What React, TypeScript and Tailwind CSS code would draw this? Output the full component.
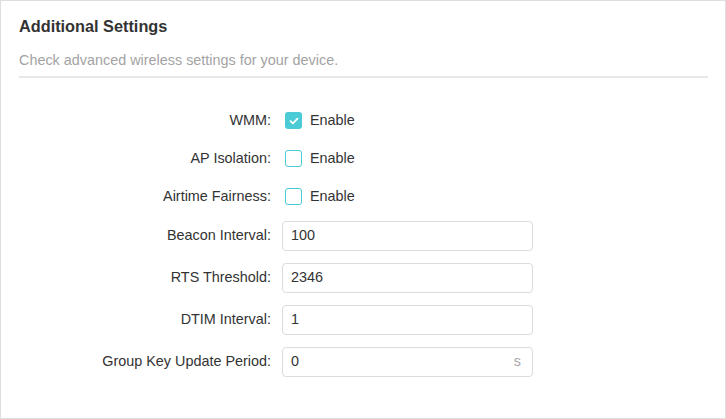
import React from 'react';

function CheckRow({ label, checked, last }: { label: string; checked?: boolean; last?: boolean }) {
  return (
    <div className={`flex items-center ${last ? 'h-[37px]' : 'h-[38px]'}`}>
      <div className="w-[252px] text-right text-[14.4px] text-[#333]">{label}:</div>
      <div className="ml-[14px] flex items-center">
        {checked ? (
          <span className="w-[17px] h-[17px] rounded-[3px] bg-[#4acbd6] flex items-center justify-center">
            <svg width="10" height="8" viewBox="0 0 10 8" fill="none">
              <path d="M1.5 4.2 L3.9 6.4 L8.5 1.6" stroke="#fff" strokeWidth="1.8" strokeLinecap="round" strokeLinejoin="round" />
            </svg>
          </span>
        ) : (
          <span className="w-[17px] h-[17px] rounded-[3px] border border-[#4acbd6] bg-white box-border" />
        )}
        <span className="ml-[8px] text-[14.4px] text-[#333]">Enable</span>
      </div>
    </div>
  );
}

function InputRow({ label, value, unit }: { label: string; value: string; unit?: string }) {
  return (
    <div className="flex items-center h-[42px]">
      <div className="w-[252px] text-right text-[14.4px] text-[#333]">{label}:</div>
      <div className="ml-[11px] w-[251px] h-[30px] border border-[#dcdcdc] rounded-[4px] bg-white flex items-center pl-[8px] pr-[11px]">
        <span className="flex-1 text-[14.4px] text-[#333]">{value}</span>
        {unit && <span className="text-[14.4px] text-[#aaa]">{unit}</span>}
      </div>
    </div>
  );
}

export default function App() {
  return (
    <div
      className="w-[726px] h-[419px] border border-[#dedede] bg-white box-border"
      style={{ fontFamily: '"Liberation Sans", Arial, sans-serif' }}
    >
      <div className="pl-[18px] pr-[17px] pt-[14px]">
        <h2 className="text-[16.3px] font-bold text-[#333] leading-[22px]">Additional Settings</h2>
        <p className="mt-[13px] text-[14.4px] text-[#a3a3a3] leading-[20px]">Check advanced wireless settings for your device.</p>
        <div className="mt-[6px] h-[2px] bg-[#e8e8e8]" />
      </div>
      <div className="mt-[24px] pl-[18px]">
        <CheckRow label="WMM" checked />
        <CheckRow label="AP Isolation" />
        <CheckRow label="Airtime Fairness" last />
        <InputRow label="Beacon Interval" value="100" />
        <InputRow label="RTS Threshold" value="2346" />
        <InputRow label="DTIM Interval" value="1" />
        <InputRow label="Group Key Update Period" value="0" unit="s" />
      </div>
    </div>
  );
}
